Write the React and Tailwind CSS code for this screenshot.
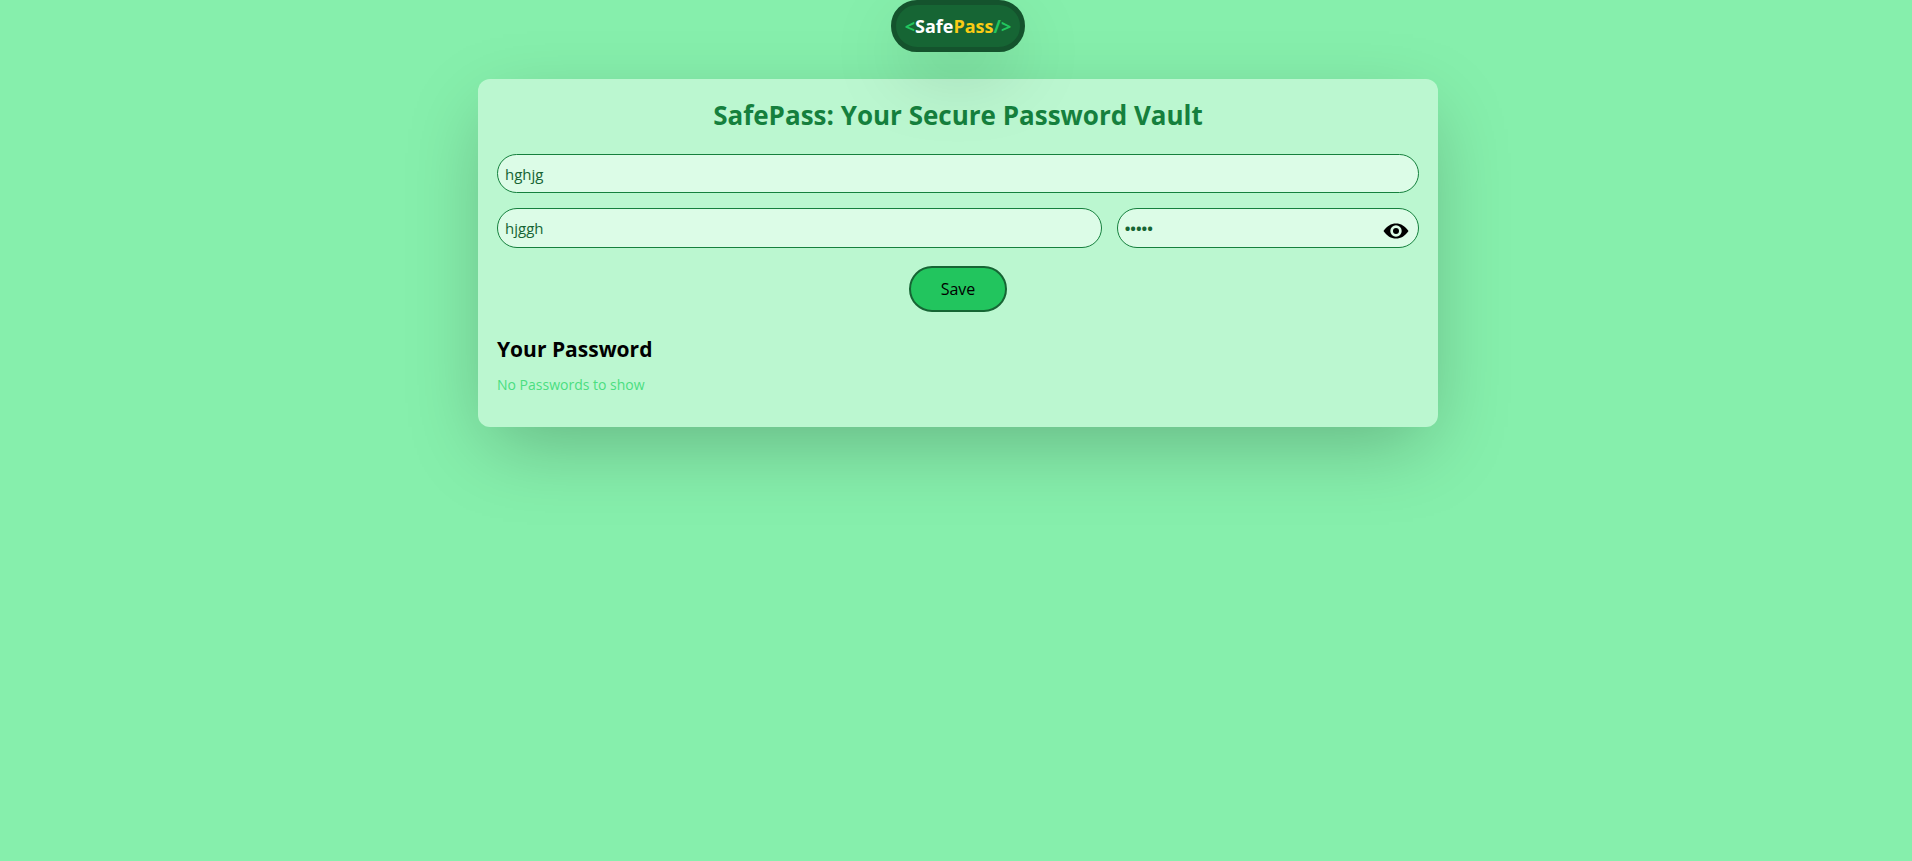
import { useState } from "react";

const field =
  "w-full min-w-0 rounded-full border border-[#15803d] bg-[#dcfce7] px-[7px] text-[15px] text-[#166534] outline-none";

function EyeIcon() {
  return (
    <svg viewBox="0 0 26 16" className="h-4 w-[26px]" aria-hidden="true">
      <path
        fill="#000"
        fillRule="evenodd"
        d="M0.5 8C4 3 8 0.5 13 0.5S22 3 25.500 8C22 13 18 15.500 13 15.500S4 13 0.5 8ZM13 2.300a5.700 5.700 0 1 0 0 11.400a5.700 5.700 0 0 0 0-11.400Z"
      />
      <circle cx="13" cy="8" r="3" fill="#000" />
    </svg>
  );
}

export default function App() {
  const [site, setSite] = useState("hghjg");
  const [username, setUsername] = useState("hjggh");
  const [password, setPassword] = useState("hjghj");
  const [visible, setVisible] = useState(false);

  return (
    <div className="min-h-screen bg-[#86efac] pl-1 font-['Open_Sans','Noto_Sans',sans-serif] text-black">
      <header className="relative z-10 mx-auto flex h-[52px] w-fit items-center rounded-full border-[5px] border-[#14532d] bg-[#166534] px-[9px] text-[18px] font-bold text-white shadow-[0_25px_75px_-12px_rgba(0,0,0,0.25)]">
        <span className="text-[#22c55e]">&lt;</span>
        <span>Safe</span>
        <span className="text-[#facc15]">Pass</span>
        <span className="text-[#22c55e]">/&gt;</span>
      </header>

      <main className="mx-auto mt-[27px] w-full max-w-[960px] rounded-xl bg-[#bbf7d0] px-[19px] pt-4 pb-[30px] shadow-[0_25px_75px_-12px_rgba(0,0,0,0.25)]">
        <h1 className="text-center text-[26px] leading-10 font-bold text-[#15803d]">
          SafePass: Your Secure Password Vault
        </h1>

        <form className="mt-[19px]" onSubmit={(e) => e.preventDefault()}>
          <input
            aria-label="Website URL"
            className={`${field} h-[39px]`}
            value={site}
            onChange={(e) => setSite(e.target.value)}
          />
          <div className="mt-[15px] grid grid-cols-[2fr_1fr] gap-[15px]">
            <input
              aria-label="Username"
              className={`${field} h-10`}
              value={username}
              onChange={(e) => setUsername(e.target.value)}
            />
            <div className="relative">
              <input
                aria-label="Password"
                type={visible ? "text" : "password"}
                className={`${field} h-10 font-bold`}
                value={password}
                onChange={(e) => setPassword(e.target.value)}
              />
              <button
                type="button"
                aria-label="Show password"
                className="absolute top-[15px] right-[10px]"
                onClick={() => setVisible(!visible)}
              >
                <EyeIcon />
              </button>
            </div>
          </div>
          <button
            type="submit"
            className="mx-auto mt-[18px] flex h-[46px] items-center rounded-full border-2 border-[#166534] bg-[#22c55e] px-[30px] text-base"
          >
            Save
          </button>
        </form>

        <h2 className="mt-[21px] text-[21px] leading-8 font-bold">Your Password</h2>
        <p className="mt-2 text-sm leading-6 text-[#4ade80]">No Passwords to show</p>
      </main>
    </div>
  );
}
